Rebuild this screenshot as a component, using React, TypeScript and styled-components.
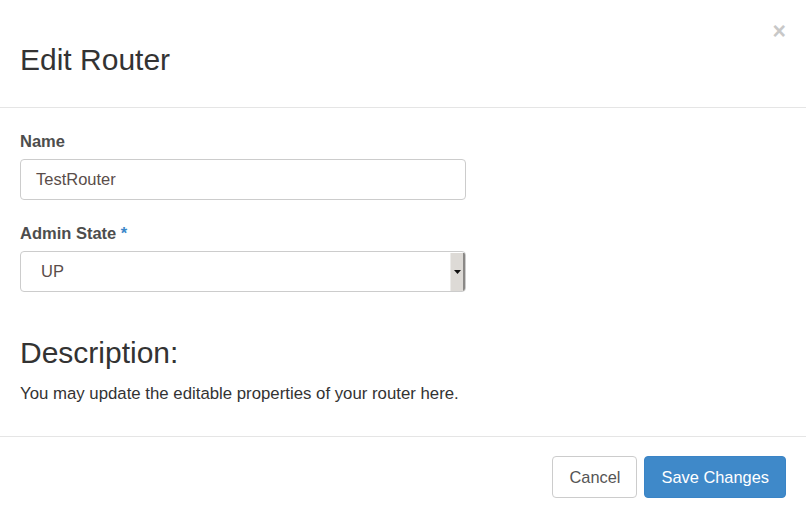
import React from "react";
import styled, { createGlobalStyle } from "styled-components";

const GlobalStyle = createGlobalStyle`
  html, body { margin: 0; padding: 0; background: #ffffff; }
  body { font-family: "Liberation Sans", Arial, Helvetica, sans-serif; color: #333333; }
  * { box-sizing: border-box; }
`;

const Modal = styled.div`
  position: relative;
  width: 806px;
  height: 518px;
  background: #ffffff;
  border-radius: 6px;
  display: flex;
  flex-direction: column;
  overflow: hidden;
`;

const Header = styled.div`
  padding: 43px 20px 31px;
  border-bottom: 1px solid #e5e5e5;
`;

const Title = styled.h3`
  margin: 0;
  font-size: 30px;
  line-height: 33px;
  font-weight: 400;
  color: #333333;
`;

const Close = styled.button`
  position: absolute;
  top: 19px;
  right: 20px;
  border: 0;
  background: transparent;
  padding: 0;
  font-family: "Liberation Sans", Arial, sans-serif;
  font-size: 23px;
  font-weight: 700;
  line-height: 24px;
  color: #c8c8c8;
  cursor: pointer;
`;

const Body = styled.div`
  padding: 22px 20px 0;
  display: flex;
  flex-direction: column;
`;

const FormGroup = styled.div`
  display: flex;
  flex-direction: column;
  margin-bottom: 22px;
`;

const Label = styled.label`
  font-size: 16.5px;
  font-weight: 700;
  line-height: 22px;
  color: #4d4d4d;
  margin-bottom: 7px;
`;

const Required = styled.span`
  color: #3a87c9;
`;

const Input = styled.div`
  width: 446px;
  height: 41px;
  border: 1px solid #cccccc;
  border-radius: 4px;
  padding: 0 15px;
  display: flex;
  align-items: center;
  font-size: 16.5px;
  color: #5a4d4a;
`;

const Select = styled.div`
  width: 446px;
  height: 41px;
  border: 1px solid #cccccc;
  border-radius: 4px;
  display: flex;
  align-items: stretch;
  font-size: 16.5px;
  color: #5a4d4a;
  overflow: hidden;
`;

const SelectValue = styled.div`
  flex: 1;
  display: flex;
  align-items: center;
  padding-left: 20px;
`;

const Arrow = styled.div`
  width: 15px;
  margin: 1px 0 0;
  background: #dddad6;
  border-left: 1px solid #ecebe9;
  border-right: 2px solid #8a8886;
  display: flex;
  align-items: center;
  justify-content: center;
`;

const SectionTitle = styled.h3`
  margin: 22px 0 14px;
  font-size: 30px;
  line-height: 33px;
  font-weight: 400;
  color: #333333;
`;

const Paragraph = styled.p`
  margin: 0;
  font-size: 16.8px;
  line-height: 22px;
  color: #333333;
`;

const Footer = styled.div`
  margin-top: auto;
  border-top: 1px solid #e5e5e5;
  padding: 19px 20px 20px;
  display: flex;
  justify-content: flex-end;
  gap: 7px;
`;

const Button = styled.button<{ $primary?: boolean }>`
  height: 42px;
  padding: 0 16px;
  border-radius: 4px;
  font-family: "Liberation Sans", Arial, sans-serif;
  font-size: 16.4px;
  line-height: 1;
  cursor: pointer;
  border: 1px solid ${(p) => (p.$primary ? "#3a84c6" : "#cccccc")};
  background: ${(p) => (p.$primary ? "#3f89c9" : "#ffffff")};
  color: ${(p) => (p.$primary ? "#ffffff" : "#555555")};
`;

export default function App() {
  return (
    <>
      <GlobalStyle />
      <Modal>
        <Header>
          <Title>Edit Router</Title>
        </Header>
        <Close aria-label="Close">×</Close>
        <Body>
          <FormGroup>
            <Label>Name</Label>
            <Input>TestRouter</Input>
          </FormGroup>
          <FormGroup>
            <Label>
              Admin State <Required>*</Required>
            </Label>
            <Select>
              <SelectValue>UP</SelectValue>
              <Arrow>
                <svg width="7" height="4" viewBox="0 0 7 4">
                  <path d="M0 0 H7 L3.5 4 Z" fill="#111" />
                </svg>
              </Arrow>
            </Select>
          </FormGroup>
          <SectionTitle>Description:</SectionTitle>
          <Paragraph>You may update the editable properties of your router here.</Paragraph>
        </Body>
        <Footer>
          <Button>Cancel</Button>
          <Button $primary>Save Changes</Button>
        </Footer>
      </Modal>
    </>
  );
}
